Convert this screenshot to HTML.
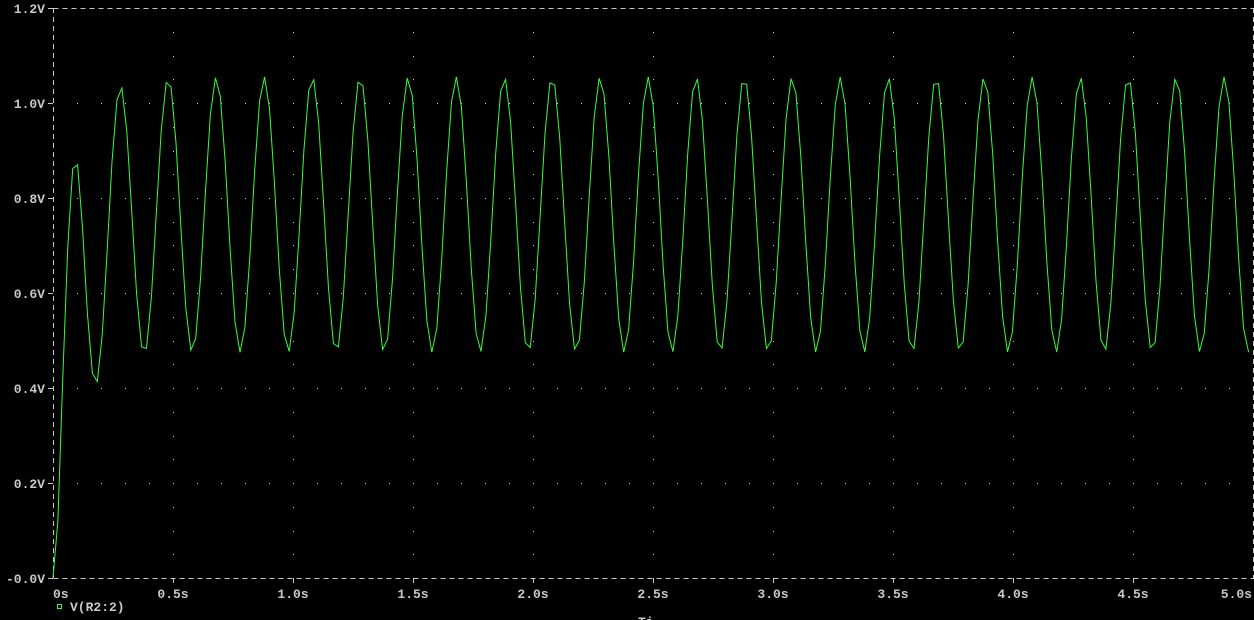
<!DOCTYPE html>
<html><head><meta charset="utf-8"><style>
html,body{margin:0;padding:0;background:#000;width:1254px;height:620px;overflow:hidden}
text{font-family:"Liberation Mono",monospace;font-size:13px;fill:#c8c8c8;font-weight:bold}
</style></head><body>
<svg id="s" width="1254" height="620" xmlns="http://www.w3.org/2000/svg">
<g stroke="#c8c8c8" stroke-width="1" stroke-dasharray="5,4" fill="none">
<line x1="53.5" y1="8.5" x2="1254" y2="8.5"/>
<line x1="53.5" y1="578.5" x2="1254" y2="578.5"/>
<line x1="53.5" y1="8" x2="53.5" y2="578"/>
<line x1="1253.5" y1="8" x2="1253.5" y2="578"/>
</g>
<g id="grid" fill="#c8c8c8"></g>
<g id="lbl"></g>
<polyline id="w" fill="none" stroke="#33ff33" stroke-width="1"/>
<rect x="57.5" y="604.5" width="4" height="4" fill="none" stroke="#33ff33"/>
<text x="70" y="611">V(R2:2)</text>
<text x="638" y="626">Ti</text>
</svg>
<script>
var X=function(t){return 53+240*t},Y=function(v){return 578-475*v};
var g=document.getElementById('grid'),h='';
for(var i=1;i<10;i++){for(var j=1;j<24;j++){h+='<rect x="'+(X(i*0.5)).toFixed(0)+'" y="'+(Y(j*0.05)).toFixed(0)+'" width="1" height="1"/>';}}
for(var j=1;j<6;j++){for(var i=1;i<50;i++){h+='<rect x="'+(X(i*0.1)).toFixed(0)+'" y="'+(Y(j*0.2)).toFixed(0)+'" width="1" height="1"/>';}}
g.innerHTML=h;
var l='',vl=['-0.0V','0.2V','0.4V','0.6V','0.8V','1.0V','1.2V'];
for(var j=0;j<7;j++){var y=Y(j*0.2);l+='<text x="45" y="'+(y+5)+'" text-anchor="end">'+vl[j]+'</text><line x1="48" y1="'+(y+0.5)+'" x2="53" y2="'+(y+0.5)+'" stroke="#c8c8c8"/>';}
var tl=['0s','0.5s','1.0s','1.5s','2.0s','2.5s','3.0s','3.5s','4.0s','4.5s','5.0s'];
for(var i=0;i<11;i++){var x=X(i*0.5);l+='<text x="'+(i==10?1252:x)+'" y="598" text-anchor="'+(i==0?'start':(i==10?'end':'middle'))+'">'+tl[i]+'</text>';if(i>0&&i<10)l+='<line x1="'+(x+0.5)+'" y1="578" x2="'+(x+0.5)+'" y2="583" stroke="#c8c8c8"/>';}
document.getElementById('lbl').innerHTML=l;
var p=[],t=0,k=0;
while(t<=5.001){var v=0.765*(1-Math.exp(-t/0.075))+0.29*(1-Math.exp(-t/0.015))*Math.cos(2*Math.PI*5*(t-0.28))+0.08*Math.exp(-Math.pow((t-0.1)/0.04,2));
p.push(X(t).toFixed(1)+','+Y(v).toFixed(1));k++;t=k*0.0205;}
document.getElementById('w').setAttribute('points',p.join(' '));
</script>
</body></html>
